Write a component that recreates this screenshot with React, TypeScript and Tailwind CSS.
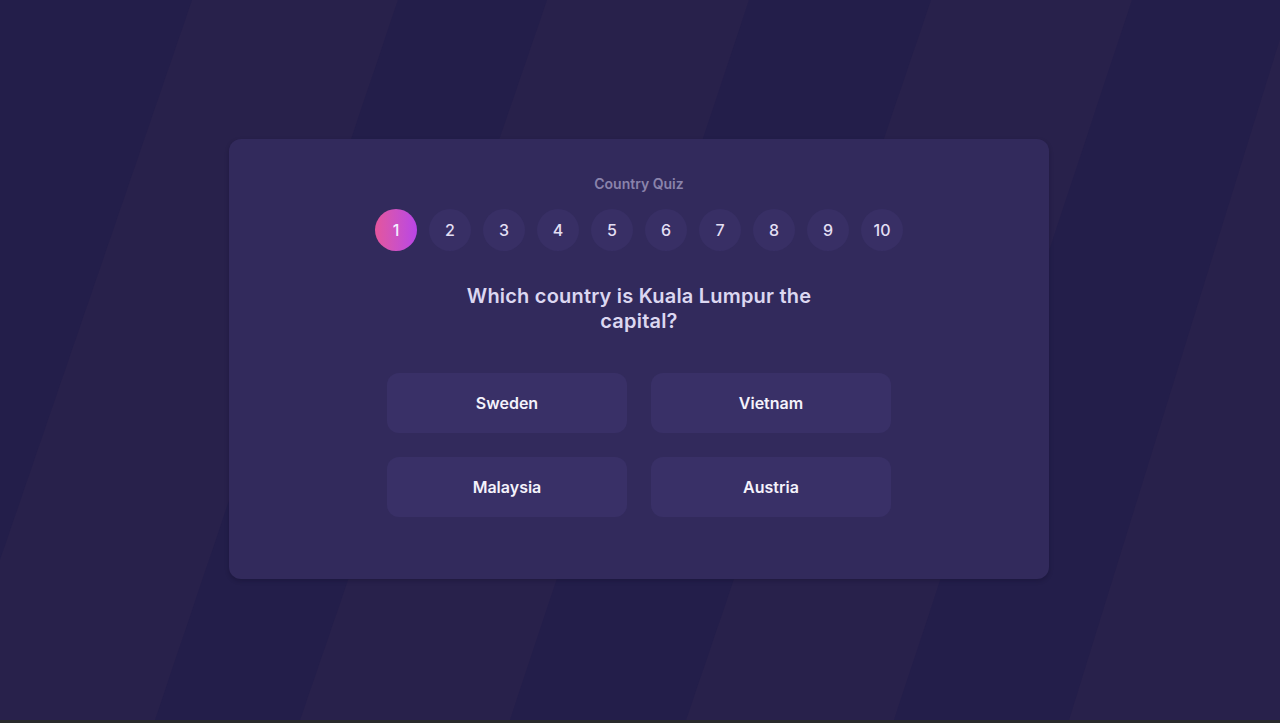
import React from 'react'

const steps = [1, 2, 3, 4, 5, 6, 7, 8, 9, 10]
const answers = ['Sweden', 'Vietnam', 'Malaysia', 'Austria']

function Backdrop() {
  // slanted stripes behind the card
  return (
    <svg
      className="absolute inset-0 h-full w-full"
      viewBox="0 0 1280 720"
      preserveAspectRatio="none"
    >
      <rect width="1280" height="720" fill="#231e4a" />
      <polygon points="192,0 398,0 155,720 -55,720" fill="#28214b" />
      <polygon points="547,0 749,0 510,720 300,720" fill="#28214b" />
      <polygon points="931,0 1132,0 894,720 686,720" fill="#28214b" />
      <polygon points="1292,0 1400,0 1400,720 1069,720" fill="#28214b" />
    </svg>
  )
}

export default function App() {
  const current = 1

  return (
    <div className="h-[723px] bg-[#292a2b] font-['Inter',sans-serif]">
      <div className="relative flex h-[720px] items-center justify-center overflow-hidden pr-[2px] pb-[2px]">
        <Backdrop />

        <div className="relative flex w-[820px] flex-col items-center rounded-xl bg-[#322a5c] pt-[35px] pb-[62px] shadow-[0_2px_4px_rgba(10,6,30,0.25)]">
          <h1 className="text-sm font-semibold leading-5 text-[#8a83ab]">Country Quiz</h1>

          {/* Progress */}
          <div className="mt-[15px] flex gap-3">
            {steps.map((n) => (
              <div
                key={n}
                className={
                  n === current
                    ? 'flex h-[42px] w-[42px] items-center justify-center rounded-full bg-gradient-to-r from-[#e4559c] to-[#b944e6] text-base font-medium text-[#f3efff]'
                    : 'flex h-[42px] w-[42px] items-center justify-center rounded-full bg-[#382f65] text-base font-medium text-[#e2def3]'
                }
              >
                {n}
              </div>
            ))}
          </div>

          {/* Question */}
          <h2 className="mt-[33px] max-w-[380px] text-center text-xl font-semibold leading-[25px] tracking-[0.2px] text-[#dcd7f1]">
            Which country is Kuala Lumpur the capital?
          </h2>

          {/* Answers */}
          <div className="mt-[39px] grid grid-cols-2 gap-6">
            {answers.map((a) => (
              <button
                key={a}
                className="flex h-[60px] w-[240px] items-center justify-center rounded-xl bg-[#393067] text-base font-semibold text-[#f4f2fb]"
              >
                {a}
              </button>
            ))}
          </div>
        </div>
      </div>
    </div>
  )
}
